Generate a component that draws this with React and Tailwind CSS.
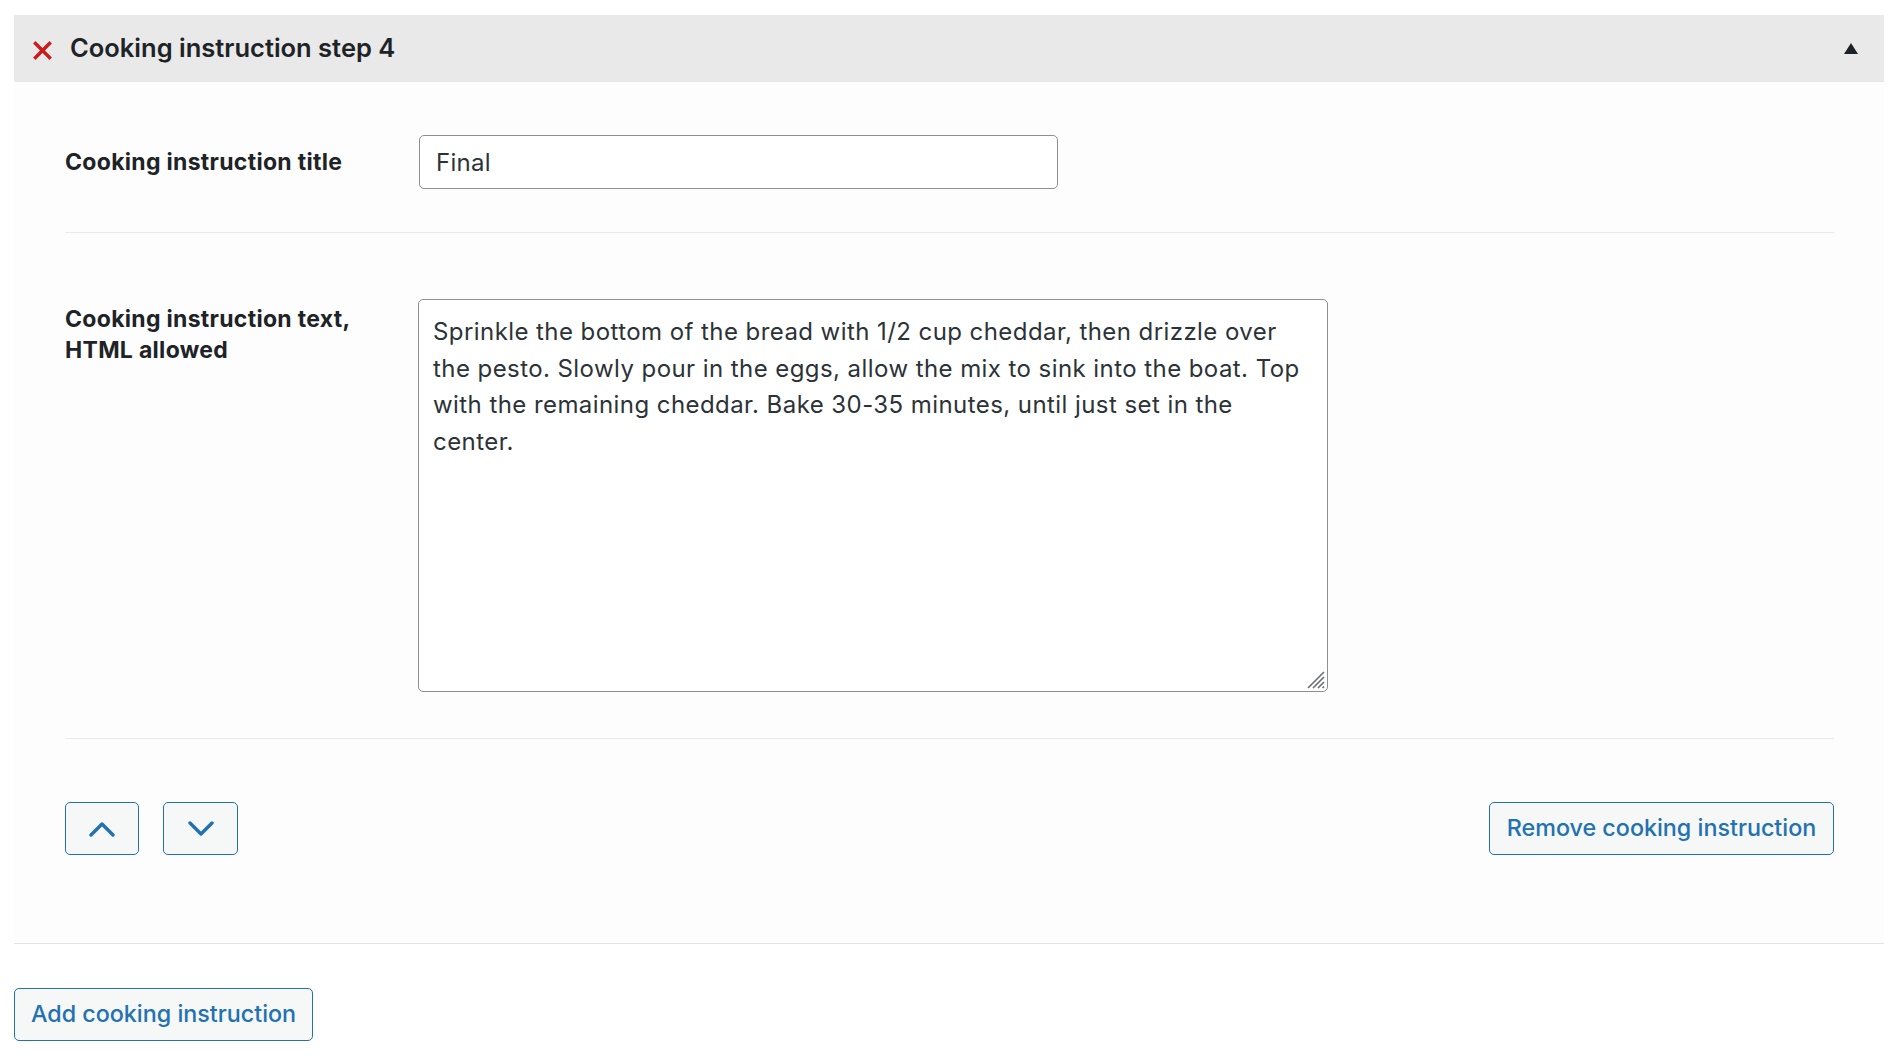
import { useState } from 'react';

const instructionText =
  'Sprinkle the bottom of the bread with 1/2 cup cheddar, then drizzle over the pesto. Slowly pour in the eggs, allow the mix to sink into the boat. Top with the remaining cheddar. Bake 30-35 minutes, until just set in the center.';

const Chevron = ({ up }) => (
  <svg width="28" height="16" viewBox="0 0 28 16" fill="none">
    <path
      d={up ? 'M3 14 L14 3 L25 14' : 'M3 2 L14 13 L25 2'}
      stroke="#2271b1"
      strokeWidth="3.4"
      strokeLinecap="round"
      strokeLinejoin="round"
    />
  </svg>
);

const App = () => {
  const [title, setTitle] = useState('Final');
  const [text, setText] = useState(instructionText);

  return (
    <div className="min-h-screen bg-white pt-[15px] pl-[14px] pr-[6px] text-[#1d2327]" style={{ fontFamily: 'Inter, "Noto Sans", sans-serif' }}>
      <div className="border-b border-[#e2e2e2] bg-[#fdfdfd]">
        <div className="flex h-[67px] items-center bg-[#e9e9e9] pl-[19px] pr-[26px]">
          <svg width="19" height="19" viewBox="0 0 19 19" className="mt-[3px]">
            <path d="M2.5 2.5 L16.5 16.5 M16.5 2.5 L2.5 16.5" stroke="#c91c1c" strokeWidth="3.4" strokeLinecap="square" />
          </svg>
          <h2 className="ml-[18px] text-[25.5px] font-semibold">Cooking instruction step 4</h2>
          <svg width="14" height="11" viewBox="0 0 14 11" className="ml-auto">
            <path d="M7 0 L14 11 L0 11 Z" fill="#1d2327" />
          </svg>
        </div>

        <div className="pl-[51px] pr-[50px]">
          <div className="flex items-center border-b border-[#eaeaea] pt-[53px] pb-[43px]">
            <label className="w-[354px] shrink-0 text-[23px] font-bold leading-[31px] tracking-[0.3px]">Cooking instruction title</label>
            <input
              value={title}
              onChange={(e) => setTitle(e.target.value)}
              className="h-[54px] w-[639px] rounded-[5px] border border-[#8c8f94] bg-white px-[16px] text-[24px] tracking-[0.3px] text-[#2c3338] outline-none"
            />
          </div>

          <div className="flex items-start border-b border-[#eaeaea] pt-[66px] pb-[46px]">
            <label className="w-[353px] shrink-0 pt-[5px] text-[23px] font-bold leading-[31px] tracking-[0.3px]">
              Cooking instruction text,
              <br />
              HTML allowed
            </label>
            <div className="relative">
              <textarea
                value={text}
                onChange={(e) => setText(e.target.value)}
                className="block h-[393px] w-[910px] resize-none rounded-[5px] border border-[#8c8f94] bg-white px-[14px] pt-[14px] pb-[10px] text-[24px] leading-[36.5px] tracking-[0.43px] text-[#2c3338] outline-none"
              />
              <svg width="22" height="22" viewBox="0 0 22 22" className="pointer-events-none absolute right-[2px] bottom-[2px]">
                <path d="M4 20 L20 4 M9 20 L20 9 M14 20 L20 14 M18.5 20 L20 18.5" stroke="#6b6e72" strokeWidth="1.6" />
              </svg>
            </div>
          </div>

          <div className="flex items-center pt-[63px] pb-[88px]">
            <button className="flex h-[53px] w-[74px] items-center justify-center rounded-[5px] border border-[#2271b1] bg-[#f6f7f7]">
              <Chevron up />
            </button>
            <button className="ml-[24px] flex h-[53px] w-[75px] items-center justify-center rounded-[5px] border border-[#2271b1] bg-[#f6f7f7]">
              <Chevron />
            </button>
            <button className="ml-auto h-[53px] w-[345px] rounded-[5px] border border-[#2271b1] bg-[#f6f7f7] text-[23.3px] font-medium text-[#2271b1]">
              Remove cooking instruction
            </button>
          </div>
        </div>
      </div>

      <button className="mt-[44px] h-[53px] w-[299px] rounded-[5px] border border-[#2271b1] bg-[#f6f7f7] text-[23.3px] font-medium text-[#2271b1]">
        Add cooking instruction
      </button>
    </div>
  );
};

export default App;
